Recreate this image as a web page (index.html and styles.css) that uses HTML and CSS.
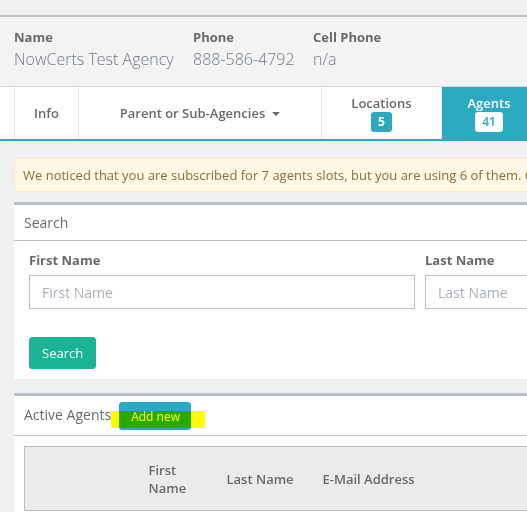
FILE: index.html
```html
<!DOCTYPE html>
<html lang="en">
<head>
<meta charset="utf-8">
<title>Agency - Agents</title>
<link rel="stylesheet" href="styles.css">
</head>
<body>
<div class="page">
  <div class="topbar"></div>

  <div class="agency">
    <div class="field">
      <div class="field-label">Name</div>
      <div class="field-value">NowCerts Test Agency</div>
    </div>
    <div class="field">
      <div class="field-label">Phone</div>
      <div class="field-value">888-586-4792</div>
    </div>
    <div class="field">
      <div class="field-label">Cell Phone</div>
      <div class="field-value">n/a</div>
    </div>
  </div>

  <div class="tabs">
    <div class="tab tab-info">Info</div>
    <div class="tab tab-parent">Parent or Sub-Agencies<span class="caret"></span></div>
    <div class="tab tab-locations">
      <span class="tab-title">Locations</span>
      <span class="badge">5</span>
    </div>
    <div class="tab tab-agents active">
      <span class="tab-title">Agents</span>
      <span class="badge">41</span>
    </div>
  </div>

  <div class="content">
    <div class="alert">We noticed that you are subscribed for 7 agents slots, but you are using 6 of them. Contact us if you need to change your subscription.</div>

    <div class="ibox">
      <div class="ibox-title"><h5>Search</h5></div>
      <div class="ibox-body">
        <div class="form-grid">
          <div class="form-group">
            <label class="form-label">First Name</label>
            <input class="form-input" type="text" placeholder="First Name">
          </div>
          <div class="form-group">
            <label class="form-label">Last Name</label>
            <input class="form-input" type="text" placeholder="Last Name">
          </div>
        </div>
        <button class="btn btn-primary" type="button">Search</button>
      </div>
    </div>

    <div class="ibox ibox-agents">
      <div class="ibox-title title-agents">
        <h5>Active Agents</h5>
        <button class="btn btn-info" type="button">Add new</button>
        <span class="highlight"></span>
      </div>
      <div class="table-wrap">
        <table class="grid">
          <colgroup>
            <col class="c-actions"><col class="c-first"><col class="c-last"><col class="c-email"><col class="c-rest">
          </colgroup>
          <thead>
            <tr>
              <th></th>
              <th>First Name</th>
              <th>Last Name</th>
              <th>E-Mail Address</th>
              <th></th>
            </tr>
          </thead>
        </table>
      </div>
    </div>
  </div>
</div>
</body>
</html>
```

FILE: styles.css
```css
html, body {
  margin: 0;
  padding: 0;
  overflow: hidden;
  background: #f0f0f0;
}

body {
  font-family: "Open Sans", "Liberation Sans", sans-serif;
  font-size: 13px;
  color: #676a6c;
}

.page {
  width: 900px;
}

.topbar {
  height: 15px;
  background: #f0f0f0;
}

.agency {
  display: grid;
  grid-template-columns: 179px 120px auto;
  padding: 11px 0 16px 14px;
  background: #f3f3f3;
  border-top: 2px solid #b7c1c8;
}

.field-label {
  font-weight: 700;
  font-size: 13px;
  line-height: 18px;
  color: #676a6c;
}

.field-value {
  margin-top: 2px;
  font-size: 16px;
  font-weight: 300;
  line-height: 22px;
  color: #6f7a85;
}

.tabs {
  display: flex;
  height: 52px;
  padding-left: 14px;
  background: #ffffff;
  border-top: 1px solid #d3dade;
  border-bottom: 2px solid #2aa9c0;
}

.tab {
  display: flex;
  flex-direction: column;
  align-items: center;
  justify-content: center;
  font-size: 13px;
  font-weight: 600;
  color: #676a6c;
  border-right: 1px solid #e7eaec;
  box-sizing: border-box;
}

.tab-info {
  width: 65px;
  border-left: 1px solid #e7eaec;
}

.tab-parent {
  width: 243px;
  flex-direction: row;
}

.tab-locations {
  width: 120px;
}

.tab-agents {
  width: 94px;
}

.tab.active {
  background: #2aa9c0;
  color: #ffffff;
  border-right: none;
}

.tab-title {
  line-height: 16px;
}

.caret {
  display: inline-block;
  width: 0;
  height: 0;
  margin-left: 7px;
  margin-top: 1px;
  border-top: 4px solid #676a6c;
  border-left: 4px solid transparent;
  border-right: 4px solid transparent;
}

.badge {
  display: inline-block;
  height: 20px;
  line-height: 20px;
  padding: 0 7px;
  margin-top: 1px;
  border-radius: 3px;
  background: #2aa9c0;
  color: #ffffff;
  font-size: 12px;
  font-weight: 700;
}

.tab.active .badge {
  background: #ffffff;
  color: #2aa9c0;
  font-weight: 600;
}

.content {
  padding: 17px 0 0 14px;
}

.alert {
  padding: 7px 8px;
  line-height: 18px;
  font-size: 13px;
  white-space: nowrap;
  color: #8a6d3b;
  background: #fcf8e3;
  border: 1px solid #faebcc;
  border-radius: 4px;
}

.ibox {
  margin-top: 10px;
  background: #ffffff;
  border-top: 3px solid #b7c1c8;
}

.ibox-agents {
  margin-top: 14px;
}

.ibox-title {
  height: 35px;
  padding: 0 10px;
  display: flex;
  align-items: center;
  border-bottom: 1px solid #b7c1c8;
}

.ibox-title h5 {
  margin: 0;
  font-size: 14px;
  font-weight: 400;
  color: #676a6c;
}

.title-agents {
  position: relative;
  height: 39px;
  padding-bottom: 0;
}

.title-agents h5 {
  margin-bottom: 3px;
}

.ibox-body {
  padding: 10px 15px 10px 15px;
}

.form-grid {
  display: grid;
  grid-template-columns: 386px 386px;
  column-gap: 10px;
}

.form-label {
  display: block;
  font-size: 13px;
  font-weight: 700;
  line-height: 18px;
  margin-bottom: 6px;
  color: #676a6c;
}

.form-input {
  display: block;
  box-sizing: border-box;
  width: 100%;
  height: 34px;
  margin: 0;
  padding: 0 12px;
  border: 1px solid #b7c3cb;
  border-radius: 0;
  font-family: "Open Sans", "Liberation Sans", sans-serif;
  font-size: 14px;
  color: #676a6c;
  background: #ffffff;
}

.form-input::placeholder {
  color: #a9b0b6;
}

.btn {
  font-family: "Open Sans", "Liberation Sans", sans-serif;
  border-radius: 3px;
  color: #ffffff;
  cursor: pointer;
}

.btn-primary {
  margin-top: 28px;
  height: 32px;
  padding: 0 12px;
  font-size: 13px;
  background: #1ab394;
  border: 1px solid #1ab394;
}

.btn-info {
  margin-left: 8px;
  margin-top: 1px;
  height: 28px;
  padding: 0 10px 0 11px;
  font-size: 12px;
  background: #2aa9c0;
  border: 1px solid #2aa9c0;
}

.highlight {
  position: absolute;
  left: 97px;
  top: 15px;
  width: 94px;
  height: 17px;
  background: #ffff00;
  mix-blend-mode: multiply;
}

.table-wrap {
  padding: 10px;
}

.grid {
  table-layout: fixed;
  width: 860px;
  border-collapse: collapse;
  border: 1px solid #b7c1c8;
  background: #ebebeb;
}

.c-actions { width: 114px; }
.c-first { width: 78px; }
.c-last { width: 96px; }
.c-email { width: 220px; }

.grid th {
  padding: 14px 10px 13px;
  text-align: left;
  vertical-align: middle;
  font-size: 13px;
  font-weight: 600;
  line-height: 18px;
  color: #676a6c;
}
```
